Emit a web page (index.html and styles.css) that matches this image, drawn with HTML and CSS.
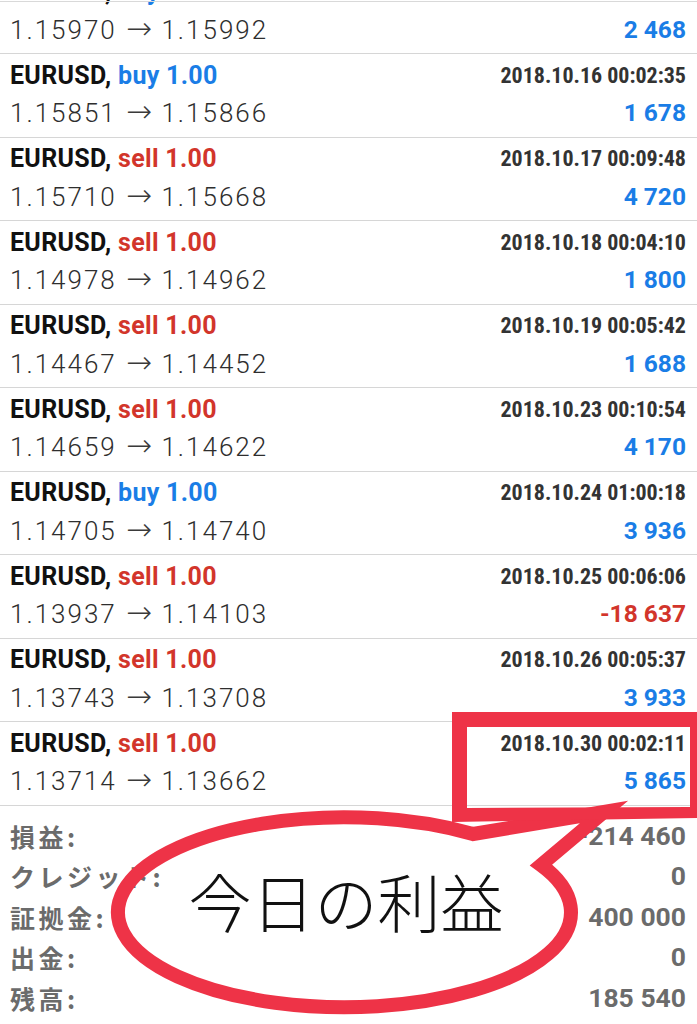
FILE: index.html
```html
<!DOCTYPE html>
<html lang="ja">
<head>
<meta charset="utf-8">
<title>履歴</title>
<link rel="stylesheet" href="styles.css">
</head>
<body>
<div class="page">
  <div class="list">
    <div class="trade">
      <div class="line1"><span class="sym">EURUSD, <span class="buy">buy 1.00</span></span><span class="date">2018.10.15 00:03:21</span></div>
      <div class="line2"><span class="price">1.15970 <span class="arr">→</span> 1.15992</span><span class="profit">2 468</span></div>
    </div>
    <div class="trade">
      <div class="line1"><span class="sym">EURUSD, <span class="buy">buy 1.00</span></span><span class="date">2018.10.16 00:02:35</span></div>
      <div class="line2"><span class="price">1.15851 <span class="arr">→</span> 1.15866</span><span class="profit">1 678</span></div>
    </div>
    <div class="trade">
      <div class="line1"><span class="sym">EURUSD, <span class="sell">sell 1.00</span></span><span class="date">2018.10.17 00:09:48</span></div>
      <div class="line2"><span class="price">1.15710 <span class="arr">→</span> 1.15668</span><span class="profit">4 720</span></div>
    </div>
    <div class="trade">
      <div class="line1"><span class="sym">EURUSD, <span class="sell">sell 1.00</span></span><span class="date">2018.10.18 00:04:10</span></div>
      <div class="line2"><span class="price">1.14978 <span class="arr">→</span> 1.14962</span><span class="profit">1 800</span></div>
    </div>
    <div class="trade">
      <div class="line1"><span class="sym">EURUSD, <span class="sell">sell 1.00</span></span><span class="date">2018.10.19 00:05:42</span></div>
      <div class="line2"><span class="price">1.14467 <span class="arr">→</span> 1.14452</span><span class="profit">1 688</span></div>
    </div>
    <div class="trade">
      <div class="line1"><span class="sym">EURUSD, <span class="sell">sell 1.00</span></span><span class="date">2018.10.23 00:10:54</span></div>
      <div class="line2"><span class="price">1.14659 <span class="arr">→</span> 1.14622</span><span class="profit">4 170</span></div>
    </div>
    <div class="trade">
      <div class="line1"><span class="sym">EURUSD, <span class="buy">buy 1.00</span></span><span class="date">2018.10.24 01:00:18</span></div>
      <div class="line2"><span class="price">1.14705 <span class="arr">→</span> 1.14740</span><span class="profit">3 936</span></div>
    </div>
    <div class="trade">
      <div class="line1"><span class="sym">EURUSD, <span class="sell">sell 1.00</span></span><span class="date">2018.10.25 00:06:06</span></div>
      <div class="line2"><span class="price">1.13937 <span class="arr">→</span> 1.14103</span><span class="profit loss">-18 637</span></div>
    </div>
    <div class="trade">
      <div class="line1"><span class="sym">EURUSD, <span class="sell">sell 1.00</span></span><span class="date">2018.10.26 00:05:37</span></div>
      <div class="line2"><span class="price">1.13743 <span class="arr">→</span> 1.13708</span><span class="profit">3 933</span></div>
    </div>
    <div class="trade">
      <div class="line1"><span class="sym">EURUSD, <span class="sell">sell 1.00</span></span><span class="date">2018.10.30 00:02:11</span></div>
      <div class="line2"><span class="price">1.13714 <span class="arr">→</span> 1.13662</span><span class="profit">5 865</span></div>
    </div>
  </div>

  <div class="summary">
    <div class="srow"><span class="label">損益:</span><span class="value">-214 460</span></div>
    <div class="srow"><span class="label">クレジット:</span><span class="value">0</span></div>
    <div class="srow"><span class="label">証拠金:</span><span class="value">400 000</span></div>
    <div class="srow"><span class="label">出金:</span><span class="value">0</span></div>
    <div class="srow"><span class="label">残高:</span><span class="value">185 540</span></div>
  </div>

  <div class="topline"></div>

  <svg class="overlay" width="697" height="1024" viewBox="0 0 697 1024" xmlns="http://www.w3.org/2000/svg">
    <path class="bubble" d="M473,834 L604,812 L541,865 A226.5,95 0 1,1 473,834 Z"/>
    <path class="frame" fill-rule="evenodd" d="M452,712 L700,712 L700,818 L452,822 Z M467,727 L690,727 L690,807 L467,808 Z"/>
    <text class="bubble-text" x="346" y="927" text-anchor="middle">今日の利益</text>
  </svg>
</div>
</body>
</html>
```

FILE: styles.css
```css
html, body {
  margin: 0;
  padding: 0;
  background: #ffffff;
}

body {
  width: 697px;
  height: 1024px;
  overflow: hidden;
  font-family: "Roboto", "Liberation Sans", sans-serif;
}

.page {
  position: relative;
  width: 697px;
  height: 1024px;
  overflow: hidden;
}

.list {
  margin-top: -29.5px;
}

.trade {
  box-sizing: border-box;
  height: 83.5px;
  padding: 0 11px 0 10px;
  border-bottom: 1px solid #d6d6d6;
}

.line1 {
  display: flex;
  justify-content: space-between;
  align-items: center;
  height: 43px;
}

.line2 {
  display: flex;
  justify-content: space-between;
  align-items: center;
  height: 32px;
}

.sym {
  font-family: "Roboto", "Liberation Sans", sans-serif;
  font-weight: 700;
  font-size: 25px;
  letter-spacing: 0.3px;
  color: #111111;
  line-height: 30px;
}

.buy {
  color: #1a7de6;
}

.sell {
  color: #d2352b;
}

.date {
  font-family: "Liberation Sans Narrow", "Roboto Condensed", "Roboto", sans-serif;
  font-weight: 700;
  font-size: 22px;
  color: #333333;
  line-height: 26px;
}

.price {
  font-family: "Roboto", "Liberation Sans", sans-serif;
  font-weight: 300;
  font-size: 26px;
  letter-spacing: 2px;
  color: #2e2e2e;
  line-height: 30px;
}

.arr {
  font-family: "DejaVu Sans", sans-serif;
  font-weight: 200;
  font-size: 31px;
  line-height: 0;
  letter-spacing: 0;
  margin: 0 1px;
  color: #3a3a3a;
}

.profit {
  font-family: "Roboto", "Liberation Sans", sans-serif;
  font-weight: 700;
  font-size: 24.5px;
  color: #1a7de6;
  line-height: 28px;
}

.profit.loss {
  color: #d2352b;
}

.summary {
  padding: 10px 11px 0 10px;
}

.srow {
  display: flex;
  justify-content: space-between;
  align-items: center;
  height: 40.5px;
}

.label {
  font-family: "Noto Sans CJK JP", "Noto Sans", sans-serif;
  font-weight: 700;
  font-size: 25px;
  letter-spacing: 3.5px;
  color: #6b6b6b;
  line-height: 30px;
}

.value {
  font-family: "Roboto", "Liberation Sans", sans-serif;
  font-weight: 700;
  font-size: 26.5px;
  color: #6b6b6b;
  line-height: 30px;
}

.topline {
  position: absolute;
  top: 1px;
  left: 0;
  width: 697px;
  height: 1px;
  background: #d9d9d9;
}

.overlay {
  position: absolute;
  top: 0;
  left: 0;
}

.bubble {
  fill: none;
  stroke: #ee3347;
  stroke-width: 14px;
  stroke-linejoin: miter;
  stroke-miterlimit: 8;
}

.frame {
  fill: #ee3347;
}

.bubble-text {
  font-family: "Noto Sans CJK JP", "Noto Sans CJK SC", sans-serif;
  font-weight: 300;
  font-size: 63px;
  fill: #111111;
}
```
